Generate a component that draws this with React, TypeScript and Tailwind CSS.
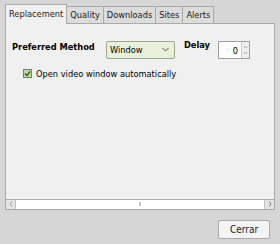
import React from "react";

const tabs = ["Replacement", "Quality", "Downloads", "Sites", "Alerts"];

function Tab({ label, active }: { label: string; active?: boolean }) {
  return (
    <div
      className={
        active
          ? "relative z-10 -mb-px border border-b-0 border-[#a9a9a9] bg-[#f0f0f0] px-[3px] pb-[3px] pt-[2px] text-[#1a1a1a]"
          : "mt-[2px] border border-b-0 border-l-0 border-[#a9a9a9] bg-[#dcdcdc] px-[3px] pt-[1px] pb-[1px] text-[#1a1a1a]"
      }
    >
      {label}
    </div>
  );
}

export default function App() {
  return (
    <div
      className="flex h-[244px] w-[280px] flex-col whitespace-nowrap bg-[#d6d6d6] text-[9.2px]"
      style={{ fontFamily: '"DejaVu Sans Condensed", "DejaVu Sans", sans-serif' }}
    >
      <div className="mx-[5px] mt-[4px] flex items-end">
        {tabs.map((t, i) => (
          <Tab key={t} label={t} active={i === 0} />
        ))}
      </div>
      <div className="mx-[5px] flex h-[187px] flex-col border border-[#a9a9a9] bg-[#f0f0f0]">
        <div className="flex flex-1 flex-col">
          <div className="mt-[17px] flex items-start pl-[6px]">
            <span className="mt-[-1px] w-[94px] font-bold">Preferred Method</span>
            <div className="flex h-[18px] w-[69px] items-center justify-between rounded-[2px] border border-[#9aaa8a] bg-[#e8f0dc] pl-[3px] pr-[5px]">
              <span>Window</span>
              <svg width="7" height="5" viewBox="0 0 7 5">
                <path d="M0.5 1 L3.5 4 L6.5 1" fill="none" stroke="#555" strokeWidth="1" />
              </svg>
            </div>
            <span className="ml-[9px] mt-[-3px] w-[34px] font-bold">Delay</span>
            <div className="flex h-[18px] w-[32px] border border-[#a0a0a0] bg-white">
              <span className="flex-1 pr-[3px] pt-[2px] text-right">0</span>
              <div className="flex w-[8px] flex-col items-center justify-center border-l border-[#c8c8c8] bg-[#eeeeee]">
                <svg width="5" height="12" viewBox="0 0 5 12">
                  <path d="M1 4 L2.5 2 L4 4 M1 8 L2.5 10 L4 8" fill="none" stroke="#aaa" strokeWidth="1" />
                </svg>
              </div>
            </div>
          </div>
          <label className="mt-[8px] flex items-center gap-[4px] pl-[17px]">
            <span className="flex h-[9px] w-[9px] items-center justify-center border border-[#6a8a5a] bg-[#b8d8a0]">
              <svg width="7" height="7" viewBox="0 0 7 7">
                <path d="M1 3.5 L3 5.5 L6 1.5" fill="none" stroke="#2c5a1c" strokeWidth="1.3" />
              </svg>
            </span>
            <span>Open video window automatically</span>
          </label>
        </div>
        <div className="flex h-[10px] border-t border-[#b0b0b0] bg-white">
          <div className="flex w-[10px] items-center justify-center border-r border-[#c0c0c0] bg-[#e4e4e4]">
            <svg width="4" height="6" viewBox="0 0 4 6">
              <path d="M3 0.5 L1 3 L3 5.5" fill="none" stroke="#999" strokeWidth="1" />
            </svg>
          </div>
          <div className="flex flex-1 items-center justify-center">
            <div className="h-[4px] w-[2px] border-x border-[#c8c8c8]" />
          </div>
          <div className="flex w-[10px] items-center justify-center border-l border-[#c0c0c0] bg-[#e4e4e4]">
            <svg width="4" height="6" viewBox="0 0 4 6">
              <path d="M1 0.5 L3 3 L1 5.5" fill="none" stroke="#777" strokeWidth="1" />
            </svg>
          </div>
        </div>
      </div>
      <div className="mr-[10px] mt-[10px] flex justify-end">
        <button className="h-[19px] w-[52px] rounded-[2px] border border-[#a9a9a9] bg-[#f4f4f4] text-[10px] text-[#1a1a1a]">
          Cerrar
        </button>
      </div>
    </div>
  );
}
